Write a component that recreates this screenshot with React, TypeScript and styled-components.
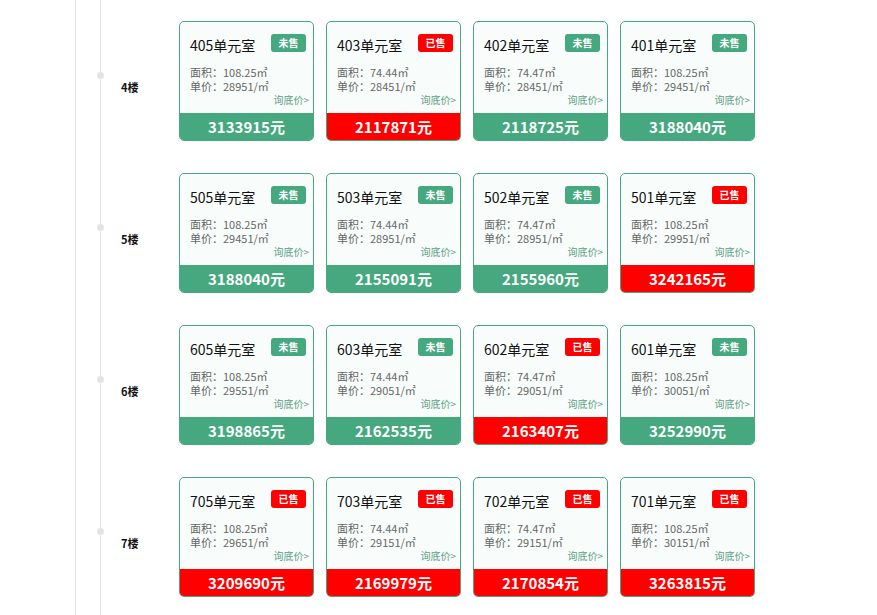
import React from "react";
import styled, { createGlobalStyle } from "styled-components";

const Global = createGlobalStyle`
  html, body { margin: 0; padding: 0; background: #fff; }
  body { font-family: "Noto Sans CJK SC", "Noto Sans", sans-serif; }
`;

const GREEN = "#45a87e";
const RED = "#ff0000";

type Unit = { no: string; sold: boolean; area: string; price: string; total: string };
type Floor = { name: string; units: Unit[] };

const floors: Floor[] = [
  {
    name: "4楼",
    units: [
      { no: "405", sold: false, area: "108.25", price: "28951", total: "3133915" },
      { no: "403", sold: true, area: "74.44", price: "28451", total: "2117871" },
      { no: "402", sold: false, area: "74.47", price: "28451", total: "2118725" },
      { no: "401", sold: false, area: "108.25", price: "29451", total: "3188040" },
    ],
  },
  {
    name: "5楼",
    units: [
      { no: "505", sold: false, area: "108.25", price: "29451", total: "3188040" },
      { no: "503", sold: false, area: "74.44", price: "28951", total: "2155091" },
      { no: "502", sold: false, area: "74.47", price: "28951", total: "2155960" },
      { no: "501", sold: true, area: "108.25", price: "29951", total: "3242165" },
    ],
  },
  {
    name: "6楼",
    units: [
      { no: "605", sold: false, area: "108.25", price: "29551", total: "3198865" },
      { no: "603", sold: false, area: "74.44", price: "29051", total: "2162535" },
      { no: "602", sold: true, area: "74.47", price: "29051", total: "2163407" },
      { no: "601", sold: false, area: "108.25", price: "30051", total: "3252990" },
    ],
  },
  {
    name: "7楼",
    units: [
      { no: "705", sold: true, area: "108.25", price: "29651", total: "3209690" },
      { no: "703", sold: true, area: "74.44", price: "29151", total: "2169979" },
      { no: "702", sold: true, area: "74.47", price: "29151", total: "2170854" },
      { no: "701", sold: true, area: "108.25", price: "30151", total: "3263815" },
    ],
  },
];

const Page = styled.div`
  padding-left: 75px;
  height: 615px;
  overflow: hidden;
`;

const Frame = styled.div`
  border-left: 1px solid #e6e6e6;
  height: 100%;
  padding-left: 24px;
`;

const Timeline = styled.div`
  border-left: 1px solid #e6e6e6;
  height: 100%;
`;

const FloorRow = styled.div`
  display: flex;
  padding: 21px 0 11px;
`;

const FloorCell = styled.div`
  position: relative;
  width: 78px;
  display: flex;
  align-items: center;
  padding-left: 20px;
  box-sizing: border-box;
`;

const Dot = styled.span`
  position: absolute;
  left: -4px;
  top: 50%;
  margin-top: -9px;
  width: 7px;
  height: 7px;
  border-radius: 50%;
  background: #e3e3e3;
`;

const FloorName = styled.span`
  margin-top: 12px;
  font-size: 11px;
  font-weight: 700;
  color: #111;
`;

const Cards = styled.div`
  display: flex;
  gap: 12px;
`;

const Card = styled.div`
  width: 135px;
  height: 120px;
  box-sizing: border-box;
  border: 1px solid ${GREEN};
  border-radius: 5px;
  background: #f8fdfb;
  overflow: hidden;
  display: flex;
  flex-direction: column;
`;

const Head = styled.div`
  display: flex;
  align-items: center;
  justify-content: space-between;
  height: 18px;
  padding: 12px 7px 0 10px;
`;

const Title = styled.span`
  font-size: 14px;
  line-height: 18px;
  color: #111;
  margin-top: 3px;
`;

const Badge = styled.span<{ $sold: boolean }>`
  width: 35px;
  height: 18px;
  border-radius: 3px;
  background: ${(p) => (p.$sold ? RED : GREEN)};
  color: #fff;
  font-size: 10px;
  font-weight: 700;
  line-height: 18px;
  text-align: center;
`;

const Info = styled.div`
  margin-top: 13px;
  padding: 0 4px 0 10px;
  font-size: 11px;
  line-height: 14px;
  color: #666;
`;

const Ask = styled.div`
  text-align: right;
  font-size: 10px;
  color: #5e9e84;
`;

const Total = styled.div<{ $sold: boolean }>`
  margin-top: auto;
  height: 27px;
  background: ${(p) => (p.$sold ? RED : GREEN)};
  color: #fff;
  font-size: 15px;
  font-weight: 700;
  line-height: 27px;
  text-align: center;
`;

function UnitCard({ u }: { u: Unit }) {
  return (
    <Card>
      <Head>
        <Title>{u.no}单元室</Title>
        <Badge $sold={u.sold}>{u.sold ? "已售" : "未售"}</Badge>
      </Head>
      <Info>
        <div>面积：{u.area}㎡</div>
        <div>单价：{u.price}/㎡</div>
        <Ask>询底价&gt;</Ask>
      </Info>
      <Total $sold={u.sold}>{u.total}元</Total>
    </Card>
  );
}

export default function App() {
  return (
    <>
      <Global />
      <Page>
        <Frame>
          <Timeline>
            {floors.map((f) => (
              <FloorRow key={f.name}>
                <FloorCell>
                  <Dot />
                  <FloorName>{f.name}</FloorName>
                </FloorCell>
                <Cards>
                  {f.units.map((u) => (
                    <UnitCard key={u.no} u={u} />
                  ))}
                </Cards>
              </FloorRow>
            ))}
          </Timeline>
        </Frame>
      </Page>
    </>
  );
}
